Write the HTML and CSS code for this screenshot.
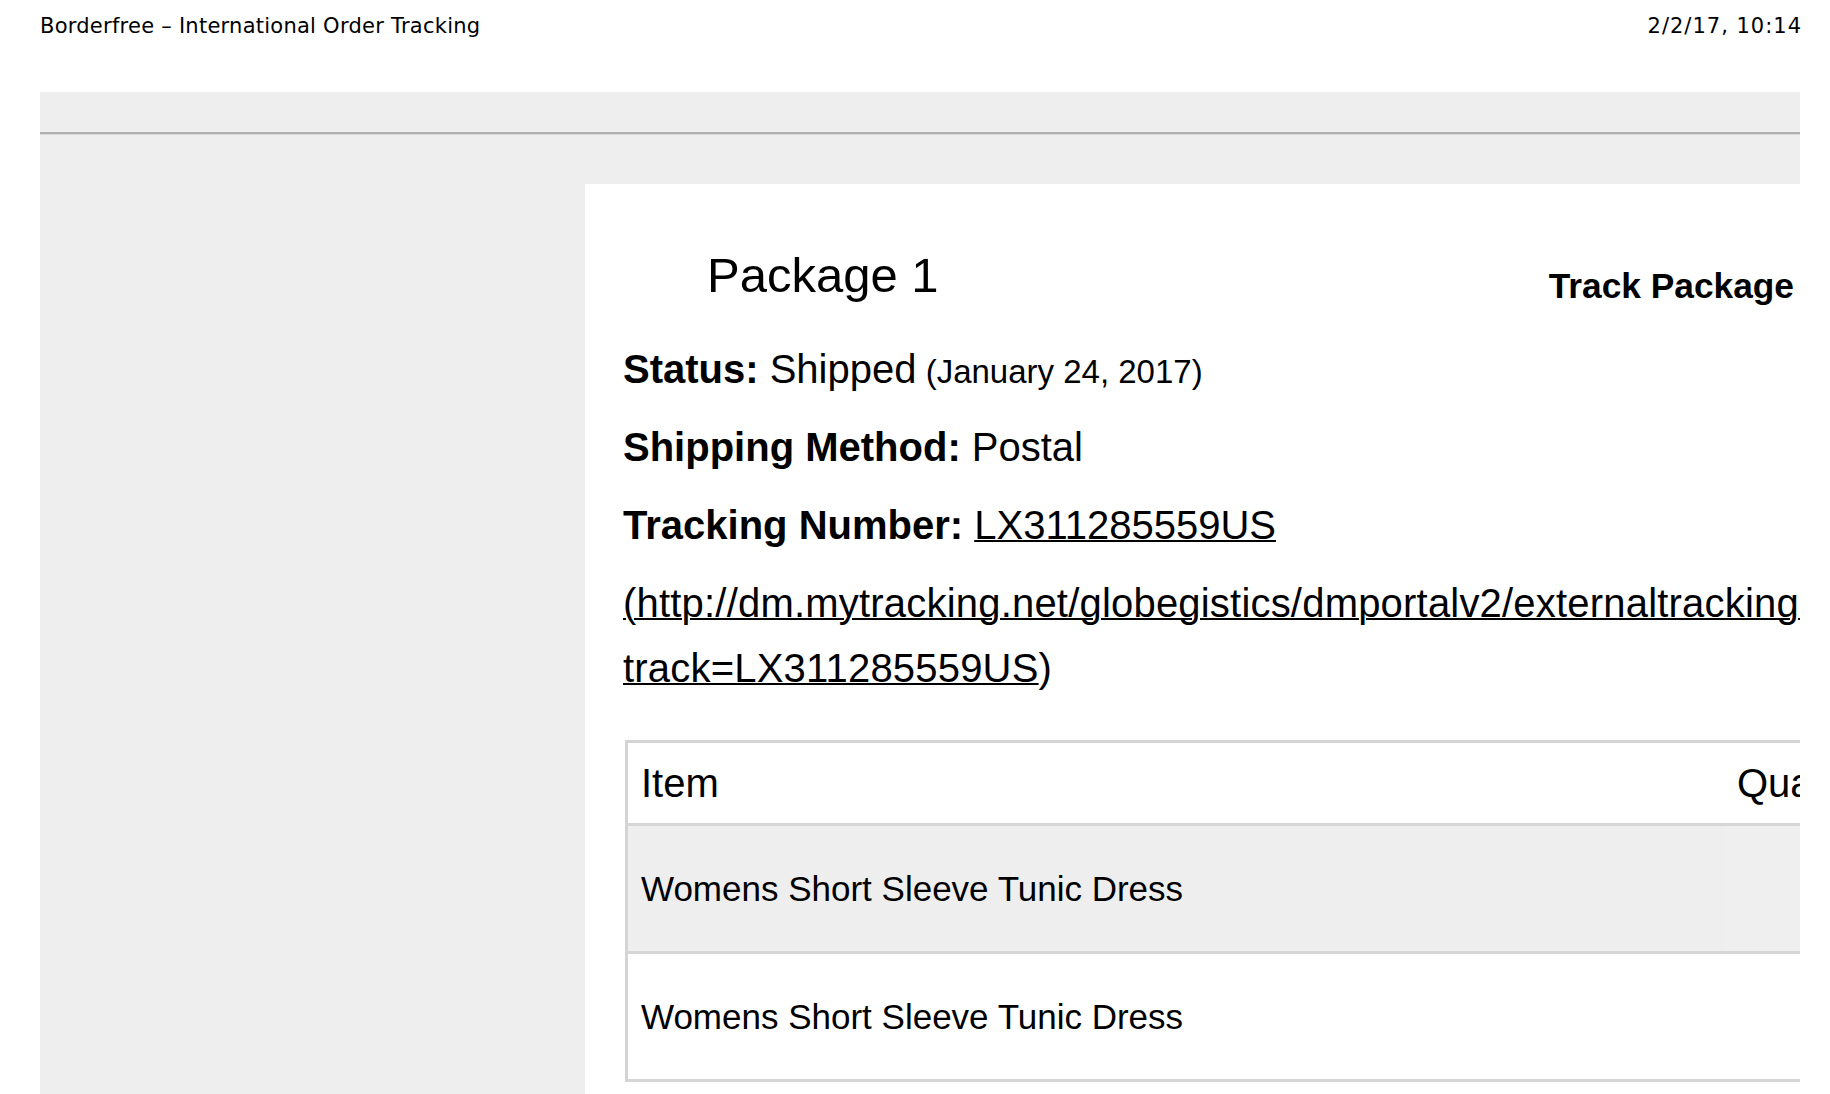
FILE: index.html
```html
<!DOCTYPE html>
<html lang="en">
<head>
<meta charset="utf-8">
<title>Borderfree – International Order Tracking</title>
<link rel="stylesheet" href="styles.css">
</head>
<body>
<div class="topline">
  <span class="title">Borderfree – International Order Tracking</span>
  <span class="stamp">2/2/17, 10:14</span>
</div>
<div class="frame">
  <div class="bar"></div>
  <div class="content">
    <aside class="side"></aside>
    <main class="panel">
      <div class="pkg-head">
        <h2 class="pkg-title">Package 1</h2>
        <div class="track-btn">Track Package</div>
      </div>
      <p class="line"><b>Status:</b> Shipped<span class="small"> (January 24, 2017)</span></p>
      <p class="line"><b>Shipping Method:</b> Postal</p>
      <p class="line"><b>Tracking Number:</b> <a class="link" href="#">LX311285559US</a></p>
      <p class="line url"><a class="link" href="#">(http://dm.mytracking.net/globegistics/dmportalv2/externaltracking?<br>track=LX311285559US</a>)</p>
      <table class="items">
        <thead>
          <tr><th class="c-item">Item</th><th class="c-qty">Quantity</th></tr>
        </thead>
        <tbody>
          <tr class="alt"><td class="c-item">Womens Short Sleeve Tunic Dress</td><td class="c-qty q-alt"></td></tr>
          <tr><td class="c-item">Womens Short Sleeve Tunic Dress</td><td class="c-qty"></td></tr>
        </tbody>
      </table>
    </main>
  </div>
</div>
</body>
</html>
```
FILE: styles.css
```css
html, body {
  margin: 0;
  padding: 0;
  overflow: hidden;
  background: #ffffff;
  color: #000000;
}

.topline {
  display: flex;
  justify-content: space-between;
  margin-top: 14px;
  padding: 0 28px 0 40px;
  font-family: "DejaVu Sans", Verdana, sans-serif;
  font-size: 21px;
  line-height: 24px;
}

.title {
  letter-spacing: 0.25px;
}

.stamp {
  letter-spacing: 1px;
}

.frame {
  margin: 54px 30px 0 40px;
  height: 1002px;
  overflow: hidden;
  background: #eeeeee;
  font-family: "Liberation Sans", Arial, sans-serif;
}

.bar {
  height: 40px;
  border-bottom: 2px solid #afafaf;
  box-shadow: 0 1px 0 #d8d8d8;
}

.content {
  display: flex;
  padding-top: 50px;
}

.side {
  width: 545px;
  flex-shrink: 0;
}

.panel {
  width: 1500px;
  flex-shrink: 0;
  background: #ffffff;
  padding: 0 0 200px 38px;
}

.pkg-head {
  display: flex;
  justify-content: space-between;
  align-items: flex-start;
  width: 1171px;
  height: 56px;
  margin: 63px 0 34px 0;
}

.pkg-title {
  margin: 0 0 0 84px;
  font-size: 49px;
  font-weight: 400;
  line-height: 56px;
}

.track-btn {
  margin-top: 19px;
  font-size: 35.3px;
  font-weight: 700;
  line-height: 40px;
}

.line {
  margin: 0 0 13px 0;
  font-size: 40px;
  line-height: 65px;
  white-space: nowrap;
}

.line b {
  font-weight: 700;
}

.small {
  font-size: 33px;
  line-height: 33px;
}

.link {
  color: #000000;
  text-decoration: underline;
  text-decoration-thickness: 2px;
}

.url {
  margin-bottom: 0;
  letter-spacing: 0.2px;
}

.items {
  margin: 39px 0 0 2px;
  border-collapse: separate;
  border-spacing: 0;
  border-top: 3px solid #d4d4d4;
  border-left: 3px solid #d4d4d4;
}

.items th,
.items td {
  padding: 0 13px;
  text-align: left;
  vertical-align: middle;
  font-weight: 400;
  border-bottom: 3px solid #d6d6d6;
  white-space: nowrap;
}

.items th {
  height: 80px;
  font-size: 40px;
}

.items td {
  height: 125px;
  font-size: 35px;
}

.c-item {
  width: 1070px;
}

.c-qty {
  width: 300px;
}

.alt td {
  background: #eeeeee;
}

.alt td.q-alt {
  background: #efefef;
}
```
